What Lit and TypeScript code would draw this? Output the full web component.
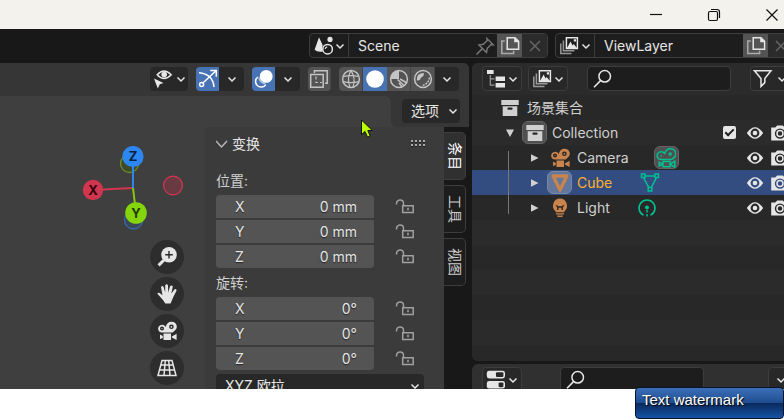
import { LitElement, html, svg, css, nothing } from "lit";
import { customElement, property } from "lit/decorators.js";
import { classMap } from "lit/directives/class-map.js";

const reels = svg`<path d="M14.7 .7a5 5 0 0 1 2.6 9.3l-1.6 1.6H4.6A4 4 0 1 1 8.8 6 5.6 5.6 0 0 1 14.7 .7Z"/>`;

const icons: Record<string, unknown> = {
  scene: svg`<path class="f" d="M6 1.2 9.600 9Q8.600 12 9.800 15.500 4.500 16.500 1.600 13.800Z"/><circle class="f" cx="17" cy="3.400" r="2.600"/><circle class="s" cx="14.600" cy="13.200" r="4.800"/><path class="s thin" d="M12.200 13a2.400 2.400 0 0 1 2-2.200"/>`,
  pin: svg`<path class="s" d="M1.500 18.500 7.600 12.400M4 9l7.500 7.500 .8-4.200 3.800-3.800 2 .3L12 2.500l.2 2-3.800 3.800Z"/>`,
  copy: svg`<path class="s dim" d="M4.800 5H1.800V17.500H13.600V14.800"/><path class="s" d="M7.200 1.800H15L18.600 5.400V13.200H7.200Z"/><path class="f" d="M14.200 1.200V6.200H19.200Z"/>`,
  cross: svg`<path class="s" d="M5 5 15 15M15 5 5 15"/>`,
  layer: svg`<path class="s dim" d="M1.800 7.500V17.400H12.500M4.400 4.500V14.800H15.400"/><path class="s" d="M7.400 1.800H18.400V12.500H7.400Z"/><path class="f" d="M8 12 11.600 5.500 13.600 9.400 14.800 8 17.800 12ZM14.800 3.200h2.200v2.200h-2.200Z"/>`,
  tree: svg`<path class="f" d="M1 1h6.600v4H1ZM9.600 7.600H19V12H9.600ZM9.600 14H19v4.400H9.600Z"/><path class="s thin dim" d="M4.300 6V16.200H8.500M4.300 9.800H8.500"/>`,
  funnel: svg`<path class="s" d="M1.500 1.800H18L11.800 9.600V13.600L8 17.400V9.600Z"/>`,
  search: svg`<circle class="s" cx="11.700" cy="7.300" r="5.800"/><path class="s" d="M7.500 11.600 1 18.200"/>`,
  toggles: svg`<rect class="f" x=".8" y=".8" width="18.200" height="7.600" rx="2.400"/><rect class="cut" x="10" y="2.200" width="7.400" height="4.800" rx="1"/><rect class="f" x=".8" y="11" width="18.200" height="7.600" rx="2.400"/><rect class="cut" x="12.600" y="12.400" width="4.800" height="4.800" rx="1"/>`,
  visibility: svg`<path class="s" d="M4.200 5.800Q11-1.800 18.200 5.800 11 13.200 4.200 5.800Z"/><circle class="f" cx="11.200" cy="5.600" r="2.800"/><path class="f" d="M1 9.500 10.500 14 6.800 15.200 4.800 19.500Z"/>`,
  gizmo: svg`<path class="s" d="M1 3.800Q14.800 5 16 18M5.200 13.800 18 1.800M12.200 1.600H18.300V7.800"/><circle class="s" cx="3.600" cy="15.400" r="2"/>`,
  overlay: svg`<circle class="f" cx="12.200" cy="7.400" r="6.400"/><path class="s" d="M3.800 8A5.600 5.600 0 1 0 11.800 15.600"/><path class="s dim" d="M5 8.500Q6 14 11.400 14.600"/>`,
  xray: svg`<path class="s" d="M5.400 4V1.700H18.200V14.200H16M1.700 5.400H14.200V18.200H1.700Z"/><path class="s thin" stroke-dasharray="3 2" d="M7 7.500V13.500H13"/>`,
  wire: svg`<circle class="s" cx="10" cy="10" r="8.400"/><path class="s thin" d="M10 1.600Q5.500 9 9 18.400M10 1.600Q15 9 12 18.400M2.500 7.400Q10 6 17.500 7.400M2.200 12.600Q10 14.500 17.800 12.600"/>`,
  solid: svg`<circle class="f" cx="10" cy="10" r="8.800"/>`,
  material: svg`<circle class="s" cx="10" cy="10" r="8.400"/><path class="f" d="M10 1.500V10H1.500A8.500 8.500 0 0 1 10 1.500Z"/><path class="s" d="M8.500 10.500 15.500 17M11 10 18 14M10 14 13 18"/>`,
  render: svg`<circle class="s" cx="10" cy="10" r="8.400"/><path class="f" d="M3.800 11.500Q3 4 10.800 4Q11.500 7 8 8.500Q7.500 12 3.800 11.500Z"/><path class="s" stroke-dasharray="2 1" d="M16.400 8.500Q16 14.500 9 16.600"/>`,
  zoom: svg`<circle class="f" cx="12" cy="7.800" r="7.800"/><path class="s thick" d="M7 13 1.600 18.400"/><path class="hole" d="M12 4V11.600M8.200 7.800H15.800"/>`,
  hand: svg`<path class="f" d="M6.400 16.500 .4 9.800Q.6 8 2.600 9L5.500 11.200 4 3Q5.400 1.200 6.600 3L8.200 8.600 8.200 1.200Q9.600-.6 11 1.200L11.200 8.500 13.200 2Q14.800.6 15.800 2.600L14.300 9.600 17.600 5.200Q19.600 4.600 19.600 6.600L16.200 13.200 13.600 19.400H8.200Z"/>`,
  movie: svg`<g class="f">${reels}<path d="M6.500 12.600H14V19H6.500ZM14.800 15.600 19.600 12.800V19L14.800 16.600ZM5.800 15 3 13.400V18L5.800 17Z"/></g><circle class="hole" cx="14.400" cy="5.800" r="1.600"/><circle class="hole" cx="5" cy="7.600" r="1.300"/>`,
  persp: svg`<path class="s" d="M5 2.500H15L19 17.500H1ZM8.300 2.500 7 17.500M11.700 2.500 13 17.500M3.800 7H16.200M2.600 12H17.400"/>`,
  lock: svg`<path class="s" d="M1.500 7.500C1.200 1.800 8.500 1.500 8.500 6.200V8.800M7.700 8.800H18.200V15.400H7.700Z"/><path class="f" d="M12.200 10.800h1.600v2.400h-1.600Z"/>`,
  box: svg`<path class="f" d="M1.300 2H18.700V7H1.300ZM2.700 8.200H17.300V18H2.700Z"/><rect class="cut" x="7.400" y="9.600" width="5.200" height="2.200" rx="1"/>`,
  mesh: svg`<path class="s fat" d="M3.200 3H16.800L10 17Z"/>`,
  bulb: svg`<path class="f" d="M10 .6A7.200 7.200 0 0 1 14.300 13.400V14.200H5.700V13.400A7.200 7.200 0 0 1 10 .6ZM6 15.200H14V16.400H6ZM7.500 17.600H12.500V19H7.500Z"/><path class="hole" d="M6 7.500 7.800 8.600V12M14 7.500 12.200 8.600V12M8 9H12"/>`,
  movieData: svg`<g class="s">${reels}<path d="M7 13.600H14V18.800H7ZM14.800 15.800 18.800 13.200V19.200L14.800 16.800ZM5.800 15.600 3.200 14.200V18L5.800 17Z"/><circle cx="14.200" cy="6" r="1"/><path d="M4.500 8H6"/></g>`,
  meshData: svg`<path class="s" d="M5 3H15M3.800 5.200 8.800 14.600M16.200 5.200 11.200 14.600M1.500 1H5V4.600H1.500ZM15 1H18.500V4.600H15ZM8.200 14.400H11.800V18H8.200Z"/>`,
  lightData: svg`<path class="s" d="M6.500 17.200A8 8 0 1 1 13.500 17.200"/><circle class="f" cx="10" cy="9.600" r="2"/><path class="s" stroke-dasharray="2.500 1.500" d="M10 12V20"/>`,
  eye: svg`<path class="f" fill-rule="evenodd" d="M1.800 10Q10-1.600 18.200 10 10 21.600 1.800 10ZM10 5.600A4.400 4.400 0 1 0 10 14.400 4.400 4.400 0 0 0 10 5.600Z"/><circle class="f" cx="10" cy="10" r="2.300"/>`,
  photo: svg`<path class="f" fill-rule="evenodd" d="M1.200 4.600H5.200L7.200 2.600H12.800L14.800 4.600H18.800V17.400H1.200ZM10 5.400A5.200 5.200 0 1 0 10 15.800 5.200 5.200 0 0 0 10 5.400Z"/><circle class="s" cx="10" cy="10.600" r="3"/>`,
  right: svg`<path class="f" d="M6 6.200 13.500 10 6 13.800Z"/>`,
  down: svg`<path class="f" d="M6 6.600H14L10 14Z"/>`,
  min: svg`<path class="s thin" d="M4 9.500H16"/>`,
  restore: svg`<rect class="s thin" x="4.500" y="6.500" width="9" height="9" rx="1.500"/><path class="s thin" d="M7 4.500H13Q15.500 4.500 15.500 7V13"/>`,
  close: svg`<path class="s thin" d="M4.500 4.500 15.500 15.500M15.500 4.500 4.500 15.500"/>`,
};

const icon = (name: string) =>
  html`<svg class="icon" viewBox="0 0 20 20" width="20" height="20" aria-hidden="true">${icons[name]}</svg>`;

const chevron = html`<svg class="chev" viewBox="0 0 10 10" width="10" height="10" aria-hidden="true">
  <path class="s" d="M1.500 3.500 5 7 8.500 3.500" />
</svg>`;

const shared = css`
  *,
  *::before,
  *::after { box-sizing: border-box; }
  button, input, select {
    margin: 0;
    padding: 0;
    border: 0;
    background: none;
    color: inherit;
    font: inherit;
  }
  button {
    display: flex;
    align-items: center;
    justify-content: center;
    flex: none;
  }
  input { min-width: 0; outline: none; }
  svg { display: block; flex: none; }
  .s { fill: none; stroke: currentColor; stroke-width: 1.5; }
  .f { fill: currentColor; }
  .thin { stroke-width: 1.2; }
  .thick { stroke-width: 3; }
  .fat { stroke-width: 3.4; stroke-linejoin: round; }
  .dim { opacity: 0.6; }
  .cut { fill: #282828; }
  .hole { fill: none; stroke: #282828; stroke-width: 1.4; }
  .drop {
    width: 40px;
    height: 25px;
    gap: 2px;
    border: 1px solid #3d3d3d;
    border-radius: 4px;
    background: #282828;
  }
  .search {
    display: flex;
    align-items: center;
    width: 144px;
    height: 25px;
    padding: 0 5px;
    border: 1px solid #3d3d3d;
    border-radius: 4px;
    background: #1d1d1d;
  }
  .search input { flex: 1; }
`;

@customElement("id-block")
class IdBlock extends LitElement {
  @property() kind = "scene";
  @property() value = "";
  @property({ type: Boolean }) pinned = false;

  static styles = [shared, css`
    :host {
      display: flex;
      flex: none;
      width: 239px;
      height: 25px;
      border: 1px solid #3d3d3d;
      border-radius: 4px;
      background: #1d1d1d;
      overflow: hidden;
    }
    .pick { width: 39px; gap: 2px; border-right: 1px solid #3d3d3d; }
    .name { flex: 1; padding-left: 9px; }
    .act { width: 25px; background: #2b2b2b; color: #656565; }
    .pin { background: none; color: #767676; }
    .new { background: #545454; color: #e6e6e6; }
  `];

  render() {
    return html`
      <button class="pick" aria-label="Browse ${this.kind}">${icon(this.kind)}${chevron}</button>
      <input class="name" aria-label="${this.kind} name" .value=${this.value} />
      ${this.pinned ? html`<button class="act pin" aria-label="Pin">${icon("pin")}</button>` : nothing}
      <button class="act new" aria-label="New">${icon("copy")}</button>
      <button class="act" aria-label="Remove">${icon("cross")}</button>
    `;
  }
}

@customElement("vector-fields")
class VectorFields extends LitElement {
  @property() heading = "";
  @property() value = "";

  static styles = [shared, css`
    :host { display: block; }
    .heading { height: 29px; line-height: 29px; color: #d0d0d0; }
    .rows { display: grid; gap: 2px; border-radius: 4px; }
    .row { display: flex; align-items: center; height: 23px; }
    .field {
      flex: 1;
      min-width: 0;
      height: 23px;
      display: flex;
      align-items: center;
      padding: 0 17px 0 19px;
      background: #545454;
      text-shadow: 0 1px 1px #222;
    }
    .row:first-child .field { border-radius: 4px 4px 0 0; }
    .row:last-child .field { border-radius: 0 0 4px 4px; }
    .field input { flex: 1; width: 0; text-align: right; text-shadow: inherit; }
    .lock { width: 50px; padding-left: 12px; color: #a0a0a0; }
  `];

  render() {
    return html`
      <div class="heading">${this.heading}:</div>
      <div class="rows">
        ${["X", "Y", "Z"].map((axis) => html`
          <div class="row">
            <label class="field">${axis}<input .value=${this.value} /></label>
            <button class="lock" aria-label="Lock ${axis}">${icon("lock")}</button>
          </div>`)}
      </div>
    `;
  }
}

@customElement("viewport-3d")
class Viewport3d extends LitElement {
  static styles = [shared, css`
    :host {
      position: relative;
      display: flex;
      flex-direction: column;
      min-width: 0;
      min-height: 0;
      overflow: hidden;
      border-radius: 0 6px 0 0;
      background: #3f3f3f;
    }
    .header {
      display: flex;
      flex: none;
      justify-content: flex-end;
      gap: 8px;
      height: 33px;
      padding: 4px 10px 5px;
      background: #363636;
    }
    .group { display: flex; border-radius: 4px; overflow: hidden; background: #282828; }
    .group button { width: 24px; }
    .group .eye { width: 38px; gap: 3px; }
    .group .main { width: 23px; }
    .group .more { width: 25px; }
    .group .on { background: #4772b3; color: #fff; }
    .group .grey { background: #545454; color: #c4c4c4; border-right: 1px solid #444; }
    .options-row { display: flex; flex: none; justify-content: flex-end; height: 31px; }
    .options-box { position: relative; padding: 3px 9px 4px 11px; border-radius: 0 0 0 6px; background: #363636; }
    .options-box::before {
      content: "";
      position: absolute;
      top: 0;
      right: 100%;
      width: 6px;
      height: 6px;
      background: radial-gradient(circle at 0 100%, transparent 6px, #363636 6px);
    }
    .options {
      width: 58px;
      height: 24px;
      gap: 9px;
      justify-content: flex-start;
      padding-left: 9px;
      border-radius: 4px;
      background: #282828;
    }
    .body { display: flex; flex: 1; min-height: 0; }
    .canvas {
      display: flex;
      flex: 1;
      flex-direction: column;
      align-items: flex-end;
      gap: 10px;
      padding: 17px 21px 0 0;
    }
    .axis { font: bold 13px Inter, "Liberation Sans", sans-serif; text-anchor: middle; }
    .nav { display: grid; gap: 3px; }
    .nav button { width: 34px; height: 34px; border-radius: 50%; background: #2d2d2d; }
    .props { width: 239px; padding: 5px 20px 0 11px; background: #3b3b3b; overflow: hidden; }
    .title { display: flex; align-items: center; height: 24px; margin-bottom: 10px; }
    .title button { gap: 4px; }
    .twist { color: #b8b8b8; }
    .grip { margin-left: auto; margin-right: -2px; color: #aaa; }
    .mode {
      width: 100%;
      height: 23px;
      margin-top: 4px;
      padding: 0 4px 0 9px;
      justify-content: space-between;
      border-radius: 4px;
      background: #282828;
    }
    .tabs { display: grid; align-content: start; gap: 5px; width: 25px; padding: 5px 3px 0 0; background: #181818; }
    .tab {
      width: 22px;
      height: 48px;
      writing-mode: vertical-rl;
      text-orientation: sideways;
      border: 1px solid #3d3d3d;
      border-left: 0;
      border-radius: 0 5px 5px 0;
      background: #1d1d1d;
      color: #ccc;
    }
    .current { background: #303030; color: #fff; }
    .pointer { position: absolute; left: 360px; top: 56px; }
  `];

  render() {
    return html`
      <div class="header">
        <div class="group"><button class="eye" aria-label="Visibility">${icon("visibility")}${chevron}</button></div>
        ${["gizmo", "overlay"].map((n) => html`
          <div class="group">
            <button class="main on" aria-label=${n}>${icon(n)}</button>
            <button class="more" aria-label="${n} options">${chevron}</button>
          </div>`)}
        <div class="group"><button class="main grey" aria-label="X-ray">${icon("xray")}</button></div>
        <div class="group">
          ${["wire", "solid", "material", "render"].map((n) => html`
            <button class=${n === "solid" ? "on" : "grey"} aria-label=${n}>${icon(n)}</button>`)}
          <button aria-label="Shading options">${chevron}</button>
        </div>
      </div>
      <div class="options-row">
        <div class="options-box"><button class="options">选项${chevron}</button></div>
      </div>
      <div class="body">
        <div class="canvas">
          <svg viewBox="0 0 102 86" width="102" height="86" role="img" aria-label="Axes">
            <circle cx="47.500" cy="19.500" r="9" fill="#3e4a2c" stroke="#6b8f23" stroke-width="1.300" />
            <circle cx="51.500" cy="76" r="9" fill="#3a4757" stroke="#3469ad" stroke-width="1.300" />
            <circle cx="91" cy="41.500" r="9.400" fill="#693a42" stroke="#d0364f" stroke-width="1.300" />
            <path d="M51 44 11 46" stroke="#d0364f" stroke-width="2" />
            <path d="M51 44V12" stroke="#2c87f0" stroke-width="2" />
            <path d="M51 44 54 69" stroke="#84c90f" stroke-width="2" />
            <circle cx="11" cy="46" r="10.200" fill="#d0364f" />
            <circle cx="51" cy="12.500" r="10.600" fill="#2c87f0" />
            <circle cx="54" cy="69" r="10.800" fill="#84d50b" />
            <text class="axis" x="11" y="51" fill="#32000a">X</text>
            <text class="axis" x="51" y="17" fill="#06203f">Z</text>
            <text class="axis" x="54" y="74" fill="#223a00">Y</text>
          </svg>
          <div class="nav">
            ${["zoom", "hand", "movie", "persp"].map((n) => html`<button aria-label=${n}>${icon(n)}</button>`)}
          </div>
        </div>
        <div class="props">
          <div class="title">
            <button>
              <svg class="twist" viewBox="0 0 12 10" width="12" height="10"><path class="s" d="M0 2 5.500 8 11 2" /></svg>变换
            </button>
            <svg class="grip" viewBox="0 0 16 10" width="16" height="10">
              <path stroke="currentColor" stroke-width="2" stroke-dasharray="2 2" d="M1 2H15M1 6H15" />
              <path stroke="#1d1d1d" stroke-dasharray="2 2" d="M1 3.500H15M1 7.500H15" />
            </svg>
          </div>
          <vector-fields heading="位置" value="0 mm"></vector-fields>
          <vector-fields heading="旋转" value="0°"></vector-fields>
          <button class="mode">XYZ 欧拉${chevron}</button>
        </div>
        <div class="tabs">
          ${["条目", "工具", "视图"].map((t, i) => html`
            <button class=${classMap({ tab: true, current: i === 0 })}>${t}</button>`)}
        </div>
      </div>
      <svg class="pointer" viewBox="0 0 14 20" width="14" height="20" aria-hidden="true">
        <path d="M1.500 1V15.500L5 12.500 7.500 18.200 10.200 17 7.800 11.500H12.300Z" fill="#b9ff00" stroke="#111" />
      </svg>
    `;
  }
}

interface Item {
  name: string;
  level: number;
  icon: string;
  open?: boolean;
  data?: string;
  chip?: boolean;
  dataChip?: boolean;
  selected?: boolean;
}

const items: Item[] = [
  { name: "场景集合", level: 0, icon: "box" },
  { name: "Collection", level: 1, icon: "box", open: true, chip: true },
  { name: "Camera", level: 2, icon: "movie", data: "movieData", dataChip: true },
  { name: "Cube", level: 2, icon: "mesh", data: "meshData", chip: true, selected: true },
  { name: "Light", level: 2, icon: "bulb", data: "lightData" },
];

@customElement("outliner-panel")
class OutlinerPanel extends LitElement {
  static styles = [shared, css`
    :host {
      display: flex;
      flex-direction: column;
      min-height: 0;
      overflow: hidden;
      border-radius: 6px 0 0 6px;
      background: #282828;
    }
    .header { display: flex; flex: none; gap: 6px; height: 32px; padding: 3px 0 4px 10px; background: #2b2b2b; }
    .search { margin: 0 13px; flex: none; }
    .filter { width: 52px; justify-content: flex-start; padding-left: 2px; gap: 4px; }
    .tree {
      position: relative;
      flex: 1;
      width: calc(100% + 8px);
      background: repeating-linear-gradient(#282828 0 25px, #2b2b2b 25px 50px);
    }
    .tree::after {
      content: "";
      position: absolute;
      left: 36px;
      top: 56px;
      width: 1px;
      height: 63px;
      background: #777;
    }
    .row { display: flex; align-items: center; height: 25px; color: #d0d0d0; }
    .selected { background: #334d80; }
    .selected .name { color: #ffaf29; }
    .indent { width: 25px; }
    .cell { width: 25px; height: 25px; display: flex; align-items: center; justify-content: center; flex: none; }
    .chip { height: 23px; border: 1px solid #646464; border-radius: 6px; background: #505050; }
    .selected .chip { border-color: #7988a8; background: #63769c; }
    .object { color: #c9844d; }
    .name { margin: 0 25px 0 5px; }
    .data { color: #00c092; }
    .actions { display: flex; margin-left: auto; color: #e6e6e6; }
    .check {
      appearance: none;
      width: 13px;
      height: 13px;
      border-radius: 2px;
      background: #e6e6e6;
      display: grid;
      place-items: center;
    }
    .check:checked::before {
      content: "";
      width: 9px;
      height: 5px;
      border: solid #222;
      border-width: 0 0 2px 2px;
      transform: translateY(-1px) rotate(-45deg);
    }
  `];

  row(item: Item) {
    return html`
      <div class=${classMap({ row: true, selected: !!item.selected })}>
        ${Array.from({ length: Math.max(item.level, 1) }, () => html`<span class="indent"></span>`)}
        ${item.level
          ? html`<button class="cell" aria-label="Toggle ${item.name}">${icon(item.open ? "down" : "right")}</button>`
          : nothing}
        <span class=${classMap({ cell: true, chip: !!item.chip, object: item.level === 2 })}>${icon(item.icon)}</span>
        <span class="name">${item.name}</span>
        ${item.data
          ? html`<span class=${classMap({ cell: true, data: true, chip: !!item.dataChip })}>${icon(item.data)}</span>`
          : nothing}
        ${item.level
          ? html`<span class="actions">
              ${item.level === 1
                ? html`<span class="cell"><input class="check" type="checkbox" checked aria-label="Enable ${item.name}" /></span>`
                : nothing}
              <button class="cell" aria-label="Hide ${item.name}">${icon("eye")}</button>
              <button class="cell" aria-label="Render ${item.name}">${icon("photo")}</button>
            </span>`
          : nothing}
      </div>
    `;
  }

  render() {
    return html`
      <div class="header">
        <button class="drop" aria-label="Editor type">${icon("tree")}${chevron}</button>
        <button class="drop" aria-label="Display mode">${icon("layer")}${chevron}</button>
        <label class="search">${icon("search")}<input aria-label="Search outliner" /></label>
        <button class="drop filter" aria-label="Filter">${icon("funnel")}${chevron}</button>
      </div>
      <div class="tree">${items.map((item) => this.row(item))}</div>
    `;
  }
}

@customElement("app-root")
class AppRoot extends LitElement {
  static styles = [shared, css`
    :host {
      position: relative;
      display: flex;
      flex-direction: column;
      height: 100vh;
      overflow: hidden;
      background: #fff;
      color: #e6e6e6;
      font: 14px/20px Inter, "Noto Sans CJK SC", sans-serif;
    }
    .titlebar { display: flex; flex: none; justify-content: flex-end; height: 29px; margin-right: -17px; background: #f3f2ed; color: #111; }
    .titlebar button { width: 58px; }
    .window { display: flex; flex: 1; flex-direction: column; min-height: 0; margin-bottom: 30px; background: #181818; overflow: hidden; }
    .topbar { display: flex; flex: none; justify-content: flex-end; gap: 7px; height: 34px; padding-top: 4px; margin-right: -10px; }
    .editors { display: grid; flex: 1; grid-template-columns: minmax(0, 1fr) 312px; gap: 3px; min-height: 0; }
    .side { display: grid; grid-template-rows: minmax(0, 1fr) 25px; gap: 3px; min-width: 0; min-height: 0; }
    .properties {
      display: flex;
      gap: 38px;
      padding: 3px 0 0 10px;
      overflow: hidden;
      border-radius: 6px 0 0 0;
      background: #303030;
    }
    .properties .search { flex: none; }
    .last { margin-left: 26px; width: 25px; }
    .watermark {
      position: absolute;
      right: 0;
      bottom: 0;
      width: 149px;
      height: 32px;
      padding: 0 6px;
      border: 1px solid #081428;
      border-radius: 4px;
      background: linear-gradient(#3c6fb8, #1f4c90 50%, #0a2a5c 51%, #1553a4);
      color: #fff;
      font: 15px/24px "Liberation Sans", sans-serif;
      text-shadow: 1px 1px 1px #000;
    }
  `];

  render() {
    return html`
      <div class="titlebar">
        <button aria-label="Minimize">${icon("min")}</button>
        <button aria-label="Restore">${icon("restore")}</button>
        <button aria-label="Close">${icon("close")}</button>
      </div>
      <div class="window">
        <div class="topbar">
          <id-block kind="scene" value="Scene" pinned></id-block>
          <id-block kind="layer" value="ViewLayer"></id-block>
        </div>
        <div class="editors">
          <viewport-3d></viewport-3d>
          <div class="side">
            <outliner-panel></outliner-panel>
            <div class="properties">
              <button class="drop" aria-label="Editor type">${icon("toggles")}${chevron}</button>
              <label class="search">${icon("search")}<input aria-label="Search properties" /></label>
              <button class="drop last" aria-label="Options">${chevron}</button>
            </div>
          </div>
        </div>
      </div>
      <div class="watermark">Text watermark</div>
    `;
  }
}
